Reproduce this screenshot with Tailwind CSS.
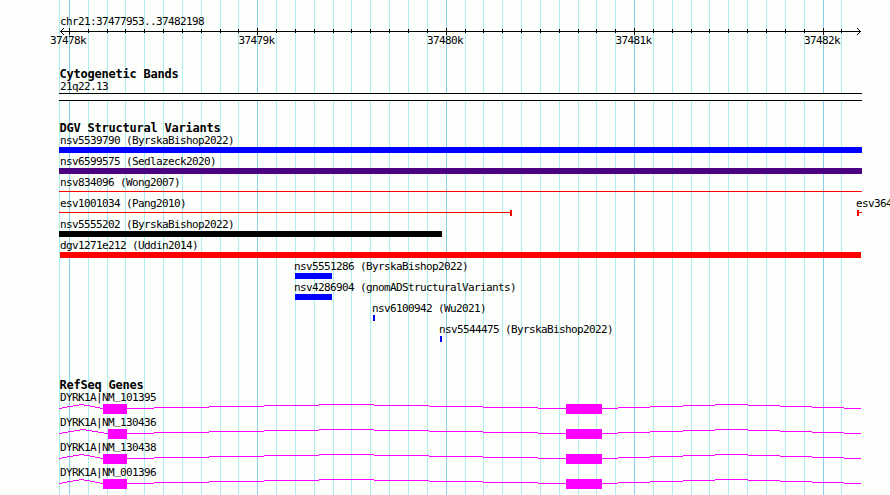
<!DOCTYPE html>
<html lang="en">
<head>
    <meta charset="UTF-8">
    <meta name="viewport" content="width=device-width, initial-scale=1.0">
    <script src="https://cdn.jsdelivr.net/npm/@tailwindcss/browser@4"></script>
    <title>chr21:37477953..37482198</title>
</head>
<body class="bg-[#fdfffc] overflow-hidden">

    <div class="relative w-[890px] h-[495px] overflow-hidden pt-[15px] whitespace-nowrap text-black font-['DejaVu_Sans_Mono',monospace] text-[11px] leading-[13px] tracking-[-0.62px]">

        <!-- Gridlines -->
        <svg class="absolute inset-0 -z-10" width="890" height="495" shape-rendering="crispEdges" fill="none">
            <path id="minor" stroke="#afeeee" />
            <path id="major" stroke="#87ceeb" />
        </svg>

        <!-- Ruler -->
        <div class="h-[52px]">
            <div class="h-[13px] pl-[60px]">chr21:37477953..37482198</div>
            <svg class="block h-[6px] overflow-visible" width="890" height="6" shape-rendering="crispEdges" fill="none" stroke="#000">
                <path d="M60 3.5H861" />
                <path id="ticks" />
                <path d="M60 3.5h1M61 2.5h1M61 4.5h1M62 1.5h1M62 5.5h1M63 .5h1M63 6.5h1M860 3.5h1M859 2.5h1M859 4.5h1M858 1.5h1M858 5.5h1M857 .5h1M857 6.5h1" />
            </svg>
            <div class="flex pl-[50px] gap-[147px]">
                <span class="w-[41.5px]">37478k</span>
                <span class="w-[41.5px]">37479k</span>
                <span class="w-[41.5px]">37480k</span>
                <span class="w-[41.5px]">37481k</span>
                <span class="w-[41.5px]">37482k</span>
            </div>
        </div>

        <!-- Cytogenetic Bands -->
        <div class="h-[54px]">
            <h2 class="h-[13px] pl-[59.5px] text-[12px] leading-[14px] font-bold tracking-[-0.22px]">Cytogenetic Bands</h2>
            <div class="h-[13px] pl-[60px]">21q22.13</div>
            <div class="ml-[59px] w-[803px] h-[8px] bg-[#fdfffc] border-y border-black"></div>
        </div>

        <!-- DGV Structural Variants -->
        <div class="h-[257px]">
            <h2 class="h-[13px] pl-[59.5px] text-[12px] leading-[14px] font-bold tracking-[-0.22px]">DGV Structural Variants</h2>
            <div class="h-[21px]">
                <div class="pl-[60px]">nsv5539790 (ByrskaBishop2022)</div>
                <div class="ml-[59px] w-[803px] h-[6px] bg-[#0000ff]"></div>
            </div>
            <div class="h-[21px]">
                <div class="pl-[60px]">nsv6599575 (Sedlazeck2020)</div>
                <div class="ml-[59px] w-[803px] h-[6px] bg-[#4b0082]"></div>
            </div>
            <div class="h-[21px]">
                <div class="pl-[60px]">nsv834096 (Wong2007)</div>
                <div class="ml-[59px] mt-[2px] w-[803px] h-px bg-[#ff0000]"></div>
            </div>
            <div class="h-[21px] flex">
                <div class="w-[856px] shrink-0">
                    <div class="pl-[60px]">esv1001034 (Pang2010)</div>
                    <div class="ml-[59px] w-[453px] h-[6px] flex items-start border-r-2 border-[#ff0000]">
                        <div class="mt-[2px] w-full h-px bg-[#ff0000]"></div>
                    </div>
                </div>
                <div class="shrink-0">
                    <div>esv3647</div>
                    <div class="ml-px w-[5px] h-[6px] flex items-start border-l-2 border-[#ff0000]">
                        <div class="mt-[2px] w-full h-px bg-[#ff0000]"></div>
                    </div>
                </div>
            </div>
            <div class="h-[21px]">
                <div class="pl-[60px]">nsv5555202 (ByrskaBishop2022)</div>
                <div class="ml-[59px] w-[383px] h-[6px] bg-black"></div>
            </div>
            <div class="h-[21px]">
                <div class="pl-[60px]">dgv1271e212 (Uddin2014)</div>
                <div class="ml-[60px] w-[801px] h-[6px] bg-[#ff0000]"></div>
            </div>
            <div class="h-[21px]">
                <div class="pl-[294px]">nsv5551286 (ByrskaBishop2022)</div>
                <div class="ml-[295px] w-[37px] h-[6px] bg-[#0000ff]"></div>
            </div>
            <div class="h-[21px]">
                <div class="pl-[294px]">nsv4286904 (gnomADStructuralVariants)</div>
                <div class="ml-[295px] w-[37px] h-[6px] bg-[#0000ff]"></div>
            </div>
            <div class="h-[21px]">
                <div class="pl-[372px]">nsv6100942 (Wu2021)</div>
                <div class="ml-[373px] w-[2px] h-[6px] bg-[#0000ff]"></div>
            </div>
            <div class="h-[21px]">
                <div class="pl-[439px]">nsv5544475 (ByrskaBishop2022)</div>
                <div class="ml-[440px] w-[2px] h-[6px] bg-[#0000ff]"></div>
            </div>
        </div>

        <!-- RefSeq Genes -->
        <div>
            <h2 class="h-[13px] pl-[59.5px] text-[12px] leading-[14px] font-bold tracking-[-0.22px]">RefSeq Genes</h2>
            <div class="h-[25px]">
                <div class="pl-[60px]">DYRK1A|NM<span class="relative -top-[2px]">_</span>101395</div>
                <svg class="gene block" data-exon="103" width="890" height="10" shape-rendering="crispEdges"></svg>
            </div>
            <div class="h-[25px]">
                <div class="pl-[60px]">DYRK1A|NM<span class="relative -top-[2px]">_</span>130436</div>
                <svg class="gene block" data-exon="108" width="890" height="10" shape-rendering="crispEdges"></svg>
            </div>
            <div class="h-[25px]">
                <div class="pl-[60px]">DYRK1A|NM<span class="relative -top-[2px]">_</span>130438</div>
                <svg class="gene block" data-exon="103" width="890" height="10" shape-rendering="crispEdges"></svg>
            </div>
            <div class="h-[25px]">
                <div class="pl-[60px]">DYRK1A|NM<span class="relative -top-[2px]">_</span>001396</div>
                <svg class="gene block" data-exon="103" width="890" height="10" shape-rendering="crispEdges"></svg>
            </div>
        </div>
    </div>

    <script>
        let major = [69, 257, 446, 634, 823];
        let minor = [59, 88, 107, 125, 144, 163, 182, 201, 220, 238, 276, 295, 314, 333, 351, 370, 389, 408, 427,
            465, 483, 502, 521, 540, 559, 578, 596, 615, 653, 672, 691, 709, 728, 747, 766, 785, 804, 841];

        let lines = (xs, top, height) => xs.map(x => `M${x + 0.5} ${top}v${height}`).join("");

        document.querySelector("#minor").setAttribute("d", lines(minor, 0, 495));
        document.querySelector("#major").setAttribute("d", lines(major, 0, 495));
        document.querySelector("#ticks").setAttribute("d", lines(major, 0, 7) + lines(minor.slice(1), 1, 4));

        // Introns are stepped hat lines: [start, end, y]
        let introns = [
            [127, 154, 4], [154, 209, 3], [209, 264, 2], [264, 319, 1], [319, 374, 0], [374, 429, 1], [429, 483, 2], [483, 538, 3], [538, 566, 4],
            [602, 618, 4], [618, 650, 3], [650, 683, 2], [683, 715, 1], [715, 748, 0], [748, 780, 1], [780, 812, 2], [812, 844, 3], [844, 861, 4]
        ];
        let first = {
            103: [[59, 62, 4], [62, 67, 3], [67, 73, 2], [73, 79, 1], [79, 84, 0], [84, 90, 1], [90, 95, 2], [95, 100, 3], [100, 103, 4]],
            108: [[59, 62, 4], [62, 68, 3], [68, 74, 2], [74, 80, 1], [80, 86, 0], [86, 92, 1], [92, 98, 2], [98, 104, 3], [104, 108, 4]]
        };

        document.querySelectorAll(".gene").forEach(gene => {
            let exon = Number(gene.dataset.exon);
            let d = first[exon].concat(introns).map(([a, b, y]) => `M${a} ${y + 0.5}H${b}`).join("");
            gene.innerHTML = `<path d="${d}" stroke="#ff00ff" fill="none" />
                <rect x="${exon}" y="0" width="${127 - exon}" height="10" fill="#ff00ff" />
                <rect x="566" y="0" width="36" height="10" fill="#ff00ff" />`;
        });
    </script>
</body>
</html>
